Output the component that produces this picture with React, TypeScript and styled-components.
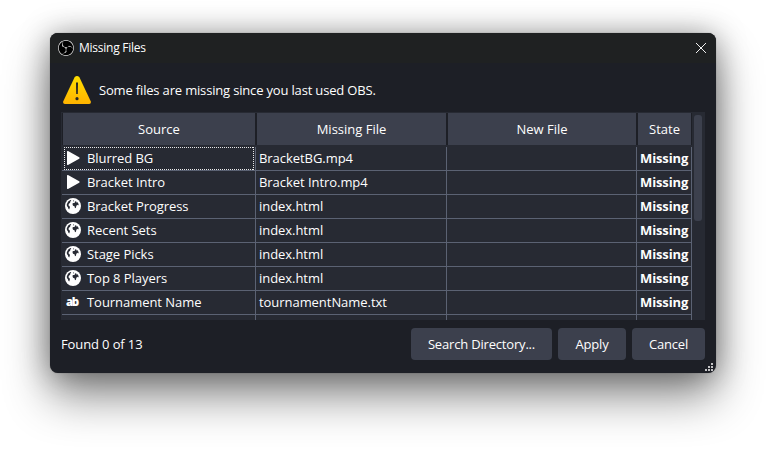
import React from "react";
import styled, { createGlobalStyle, css } from "styled-components";
import { SiObsstudio } from "react-icons/si";

const GlobalStyle = createGlobalStyle`
  * { box-sizing: border-box; }
  html, body { margin: 0; background: #fff; overflow: hidden; }
  body { font: 13px/18px "Open Sans", "Noto Sans", sans-serif; color: #fefefe; }
`;

const Desktop = styled.main`
  width: 766px;
  height: 455px;
  padding: 33px 50px 0;
  overflow: hidden;
  background: #fff;
`;

const Dialog = styled.section`
  position: relative;
  width: 666px;
  height: 340px;
  display: flex;
  flex-direction: column;
  background: #1d1f26;
  border-radius: 8px;
  box-shadow: 0 0 1px rgba(0, 0, 0, 0.5), 0 24px 46px rgba(0, 0, 0, 0.44), 0 1px 30px rgba(0, 0, 0, 0.36);
`;

const TitleBar = styled.header`
  height: 30px;
  flex: none;
  display: flex;
  align-items: center;
  padding: 0 9px 0 8px;
  background: #1f2122;
  border-radius: 8px 8px 0 0;
`;

const Title = styled.h1`
  margin: 0 auto 0 5px;
  font: 400 12px/16px "Open Sans", sans-serif;
  letter-spacing: -0.25px;
`;

const Logo = styled.span`
  display: flex;
  width: 16px;
  height: 16px;
  border-radius: 50%;
  background: #000;
  color: #dedede;
`;

const CloseButton = styled.button`
  display: flex;
  padding: 0;
  border: 0;
  background: none;
`;

const Message = styled.div`
  height: 49px;
  flex: none;
  display: flex;
  align-items: center;
  gap: 7px;
  padding: 5px 12px 0;
  letter-spacing: -0.17px;
`;

const Table = styled.div`
  width: 644px;
  height: 208px;
  flex: none;
  margin-left: 11px;
  display: flex;
  background: #272a33;
  overflow: hidden;
`;

const Grid = styled.div`
  width: 631px;
  padding: 1px 0 0 1px;
`;

const columns = css`
  display: grid;
  grid-template-columns: 194px 191px 190px 55px;
`;

const HeaderRow = styled.div`
  ${columns}
  height: 32px;
  margin-bottom: 2px;
  background: #1d1f26;
`;

const HeaderCell = styled.div`
  margin: 0 1px;
  text-align: center;
  line-height: 32px;
  background: #3c404d;
`;

const Row = styled.div`
  ${columns}
  height: 24px;
`;

const Cell = styled.div<{ $focused?: boolean; $bold?: boolean }>`
  display: flex;
  align-items: center;
  padding: 0 0 1px 3px;
  border-right: 1px solid #5b6273;
  border-bottom: 1px solid #5b6273;
  font-weight: ${(p) => (p.$bold ? 700 : 400)};
  letter-spacing: ${(p) => (p.$bold ? -0.12 : -0.05)}px;
  white-space: nowrap;
  ${(p) => p.$focused && css`
    background:
      repeating-linear-gradient(90deg, #e8e8ea 0 1px, transparent 1px 2px) 2px 0 / 190px 1px no-repeat,
      repeating-linear-gradient(90deg, #e8e8ea 0 1px, transparent 1px 2px) 2px 22px / 190px 1px no-repeat,
      repeating-linear-gradient(#e8e8ea 0 1px, transparent 1px 2px) 2px 0 / 1px 23px no-repeat,
      repeating-linear-gradient(#e8e8ea 0 1px, transparent 1px 2px) 191px 0 / 1px 23px no-repeat;
  `}
`;

const SourceIcon = styled.span`
  display: flex;
  width: 16px;
  margin-right: 6px;
`;

const ScrollTrack = styled.div`
  width: 13px;
  padding: 3px 3px 0 2px;
`;

const ScrollThumb = styled.div`
  width: 8px;
  height: 106px;
  border-radius: 3px;
  background: #3c404d;
`;

const Footer = styled.footer`
  display: flex;
  align-items: center;
  gap: 6px;
  padding: 8px 11px 0;
`;

const Status = styled.span`
  margin-right: auto;
  letter-spacing: -0.12px;
`;

const Button = styled.button<{ $width: number }>`
  width: ${(p) => p.$width}px;
  height: 32px;
  padding: 0;
  border: 0;
  border-radius: 4px;
  background: #3c404d;
  color: inherit;
  font: inherit;
  letter-spacing: -0.18px;
`;

const Grip = styled.svg`
  position: absolute;
  right: 3px;
  bottom: 2px;
`;

const WarningIcon = () => (
  <svg width="30" height="30" viewBox="0 0 30 30">
    <defs>
      <linearGradient id="amber" x1="0" y1="0" x2="0" y2="1">
        <stop offset="0" stopColor="#ffde00" />
        <stop offset="1" stopColor="#ffb300" />
      </linearGradient>
    </defs>
    <path d="M12.7 2Q15 .2 17.3 2L28.7 26.3Q29.4 29 27 29H3Q.6 29 1.3 26.3Z" fill="url(#amber)" />
    <path d="M14 7.5h2l-.2 11.5h-1.6z" fill="#262626" />
    <circle cx="15" cy="23.7" r="1.6" fill="#262626" />
  </svg>
);

const PlayIcon = () => (
  <svg width="16" height="16" viewBox="0 0 16 16">
    <path d="M2 1.7Q2 .6 3 1.1L14.2 7.2Q15.2 8 14.2 8.7L3 14.9Q2 15.4 2 14.3Z" fill="#fefefe" />
  </svg>
);

const GlobeIcon = () => (
  <svg width="16" height="16" viewBox="0 0 16 16">
    <circle cx="8" cy="8" r="8" fill="#fefefe" />
    <path d="M1.8 6.2L3.2 3.6 5.4 2 6.3 2.6 5.2 3.8 5.2 4.8 3.9 5.8 3.4 7.2 4.6 8.2 4.9 9.6 4.2 11.6 3.4 10.8 2.9 9.3 1.9 8Z" fill="#272a33" />
    <path d="M7.4 5.8L8.3 4.9 9.6 5 10 3.6 11.2 3.2 11.4 4.6 12.6 4.2 13.7 6.2 13.2 7.4 12.2 6.8 11.3 8 10.9 9.8 10 10.2 9.5 8.2 8 7.7Z" fill="#272a33" />
    <path d="M8.2 2.6L9 2.2 9.1 3.2 8.4 3.6Z" fill="#272a33" />
  </svg>
);

const TextIcon = () => (
  <svg width="16" height="16" viewBox="0 0 16 16">
    <text x="0.9" y="12.2" fontFamily="Open Sans" fontWeight="800" fontSize="11.5" textLength="13.2" fill="#fefefe">ab</text>
  </svg>
);

const icons = { media: PlayIcon, browser: GlobeIcon, text: TextIcon };

type Entry = { kind: keyof typeof icons; source: string; file: string };

const entries: Entry[] = [
  { kind: "media", source: "Blurred BG", file: "BracketBG.mp4" },
  { kind: "media", source: "Bracket Intro", file: "Bracket Intro.mp4" },
  { kind: "browser", source: "Bracket Progress", file: "index.html" },
  { kind: "browser", source: "Recent Sets", file: "index.html" },
  { kind: "browser", source: "Stage Picks", file: "index.html" },
  { kind: "browser", source: "Top 8 Players", file: "index.html" },
  { kind: "text", source: "Tournament Name", file: "tournamentName.txt" },
];

const gripDots = [[6, 0], [3, 3], [6, 3], [0, 6], [3, 6], [6, 6]];

export default function App() {
  return (
    <Desktop>
      <GlobalStyle />
      <Dialog>
        <TitleBar>
          <Logo><SiObsstudio size={16} /></Logo>
          <Title>Missing Files</Title>
          <CloseButton aria-label="Close">
            <svg width="12" height="12" viewBox="0 0 12 12">
              <path d="M1 1l10 10M11 1L1 11" stroke="#f0f0f0" strokeWidth="1" />
            </svg>
          </CloseButton>
        </TitleBar>
        <Message>
          <WarningIcon />
          <span>Some files are missing since you last used OBS.</span>
        </Message>
        <Table>
          <Grid>
            <HeaderRow>
              <HeaderCell>Source</HeaderCell>
              <HeaderCell>Missing File</HeaderCell>
              <HeaderCell>New File</HeaderCell>
              <HeaderCell>State</HeaderCell>
            </HeaderRow>
            {entries.map((entry, i) => {
              const Icon = icons[entry.kind];
              return (
                <Row key={entry.source}>
                  <Cell $focused={i === 0}>
                    <SourceIcon><Icon /></SourceIcon>
                    {entry.source}
                  </Cell>
                  <Cell>{entry.file}</Cell>
                  <Cell />
                  <Cell $bold>Missing</Cell>
                </Row>
              );
            })}
            <Row><Cell /><Cell /><Cell /><Cell /></Row>
          </Grid>
          <ScrollTrack><ScrollThumb /></ScrollTrack>
        </Table>
        <Footer>
          <Status>Found 0 of 13</Status>
          <Button $width={141}>Search Directory...</Button>
          <Button $width={68}>Apply</Button>
          <Button $width={73}>Cancel</Button>
        </Footer>
        <Grip width="8" height="8" viewBox="0 0 8 8">
          {gripDots.map(([x, y]) => <rect key={`${x}-${y}`} x={x} y={y} width="2" height="2" fill="#c3c3c5" />)}
        </Grip>
      </Dialog>
    </Desktop>
  );
}
